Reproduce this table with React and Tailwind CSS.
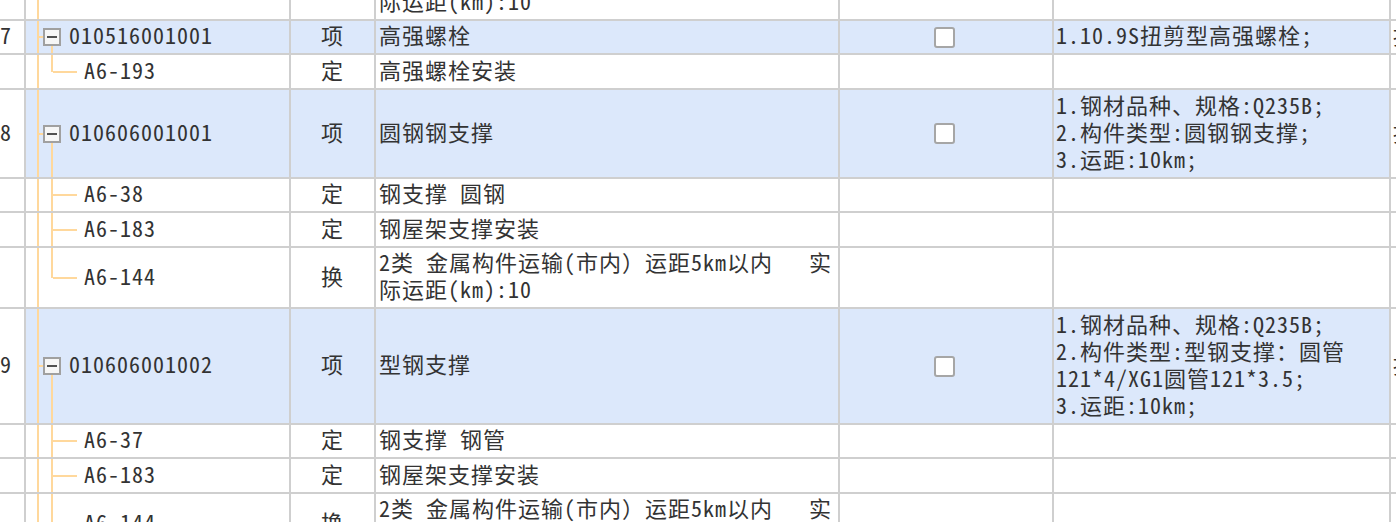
import React from "react";

const rows = [
  { kind: "child", last: true, code: "A6-144", type: "换", desc: ["2类 金属构件运输(市内）运距5km以内   实", "际运距(km):10"], h: "h-[61px]" },
  { kind: "parent", num: "7", code: "010516001001", type: "项", desc: ["高强螺栓"], feat: ["1.10.9S扭剪型高强螺栓;"], h: "h-[34px]" },
  { kind: "child", last: true, code: "A6-193", type: "定", desc: ["高强螺栓安装"], h: "h-[35px]" },
  { kind: "parent", num: "8", code: "010606001001", type: "项", desc: ["圆钢钢支撑"], feat: ["1.钢材品种、规格:Q235B;", "2.构件类型:圆钢钢支撑;", "3.运距:10km;"], h: "h-[89px]" },
  { kind: "child", last: false, code: "A6-38", type: "定", desc: ["钢支撑 圆钢"], h: "h-[34px]" },
  { kind: "child", last: false, code: "A6-183", type: "定", desc: ["钢屋架支撑安装"], h: "h-[35px]" },
  { kind: "child", last: true, code: "A6-144", type: "换", desc: ["2类 金属构件运输(市内）运距5km以内   实", "际运距(km):10"], h: "h-[61px]" },
  { kind: "parent", num: "9", code: "010606001002", type: "项", desc: ["型钢支撑"], feat: ["1.钢材品种、规格:Q235B;", "2.构件类型:型钢支撑：圆管", "121*4/XG1圆管121*3.5;", "3.运距:10km;"], h: "h-[116px]" },
  { kind: "child", last: false, code: "A6-37", type: "定", desc: ["钢支撑 钢管"], h: "h-[34px]" },
  { kind: "child", last: false, code: "A6-183", type: "定", desc: ["钢屋架支撑安装"], h: "h-[35px]" },
  { kind: "child", last: true, code: "A6-144", type: "换", desc: ["2类 金属构件运输(市内）运距5km以内   实", "际运距(km):10"], h: "h-[61px]" },
];

const cell = "border-b-2 border-r-2 border-[#cfcfcf] shrink-0";

function Lines({ lines }) {
  return (
    <div className="flex flex-col leading-[27px] mb-[5px]">
      {lines.map((l, i) => (
        <div key={i} className="whitespace-pre">{l}</div>
      ))}
    </div>
  );
}

function TreeCell({ r }) {
  if (r.kind === "parent") {
    return (
      <div className={`${cell} w-[265px] flex`}>
        <div className="w-[11px] shrink-0" />
        <div className="w-[2px] shrink-0 bg-[#ffd89c]" />
        <div className="w-[4px] shrink-0 flex items-center">
          <div className="h-[2px] w-full bg-[#ffd89c]" />
        </div>
        <div className="w-[18px] shrink-0 flex flex-col items-center">
          <div className="flex-1" />
          <div className="w-[18px] h-[18px] shrink-0 border-2 border-[#a0a0a0] bg-[#f6f6f6] flex items-center justify-center">
            <div className="w-[10px] h-[2px] bg-[#505050]" />
          </div>
          <div className="flex-1 w-[2px] bg-[#ffd89c]" />
        </div>
        <div className="pl-[8px] flex items-center whitespace-nowrap mb-[5px]">{r.code}</div>
      </div>
    );
  }
  return (
    <div className={`${cell} w-[265px] flex`}>
      <div className="w-[11px] shrink-0" />
      <div className="w-[2px] shrink-0 bg-[#ffd89c]" />
      <div className="w-[12px] shrink-0" />
      <div className="w-[2px] shrink-0 flex flex-col">
        <div className="flex-1 bg-[#ffd89c]" />
        <div className={r.last ? "flex-1" : "flex-1 bg-[#ffd89c]"} />
      </div>
      <div className="w-[24px] shrink-0 flex items-center">
        <div className="h-[2px] w-full bg-[#ffd89c]" />
      </div>
      <div className="pl-[7px] flex items-center whitespace-nowrap mb-[5px]">{r.code}</div>
    </div>
  );
}

function Row({ r }) {
  const bg = r.kind === "parent" ? "bg-[#dce8fb]" : "bg-white";
  return (
    <div className={`flex ${r.h}`}>
      <div className={`${cell} w-[26px] bg-white flex items-center justify-end pr-[12px]`}>
        <span className="mb-[5px]">{r.num || ""}</span>
      </div>
      <div className={`flex ${bg}`}>
        <TreeCell r={r} />
        <div className={`${cell} w-[85px] flex items-center justify-center`}>
          <span className="mb-[5px]">{r.type}</span>
        </div>
        <div className={`${cell} w-[464px] flex items-center pl-[3px]`}>
          <Lines lines={r.desc} />
        </div>
        <div className={`${cell} w-[214px] flex items-center justify-center pr-[4px]`}>
          {r.kind === "parent" && (
            <div className="w-[21px] h-[21px] border-2 border-[#a6a6a6] rounded-[3px] bg-white" />
          )}
        </div>
        <div className={`${cell} w-[337px] flex items-center pl-[2px]`}>
          {r.feat && <Lines lines={r.feat} />}
        </div>
      </div>
      <div className={`${cell} w-[200px] bg-white flex items-center pl-[2px] whitespace-nowrap overflow-hidden`}>
        <span className="mb-[5px]">{r.kind === "parent" ? "按设计图示尺寸以质量计算" : ""}</span>
      </div>
    </div>
  );
}

export default function App() {
  return (
    <div className="w-[1396px] h-[522px] overflow-hidden bg-white text-[22px] tracking-[1px] text-[#333333] font-['Noto_Sans_Mono_CJK_SC','Noto_Sans_CJK_SC',monospace]">
      <div className="mt-[-40px] w-[1600px]">
        {rows.map((r, i) => (
          <Row key={i} r={r} />
        ))}
      </div>
    </div>
  );
}
